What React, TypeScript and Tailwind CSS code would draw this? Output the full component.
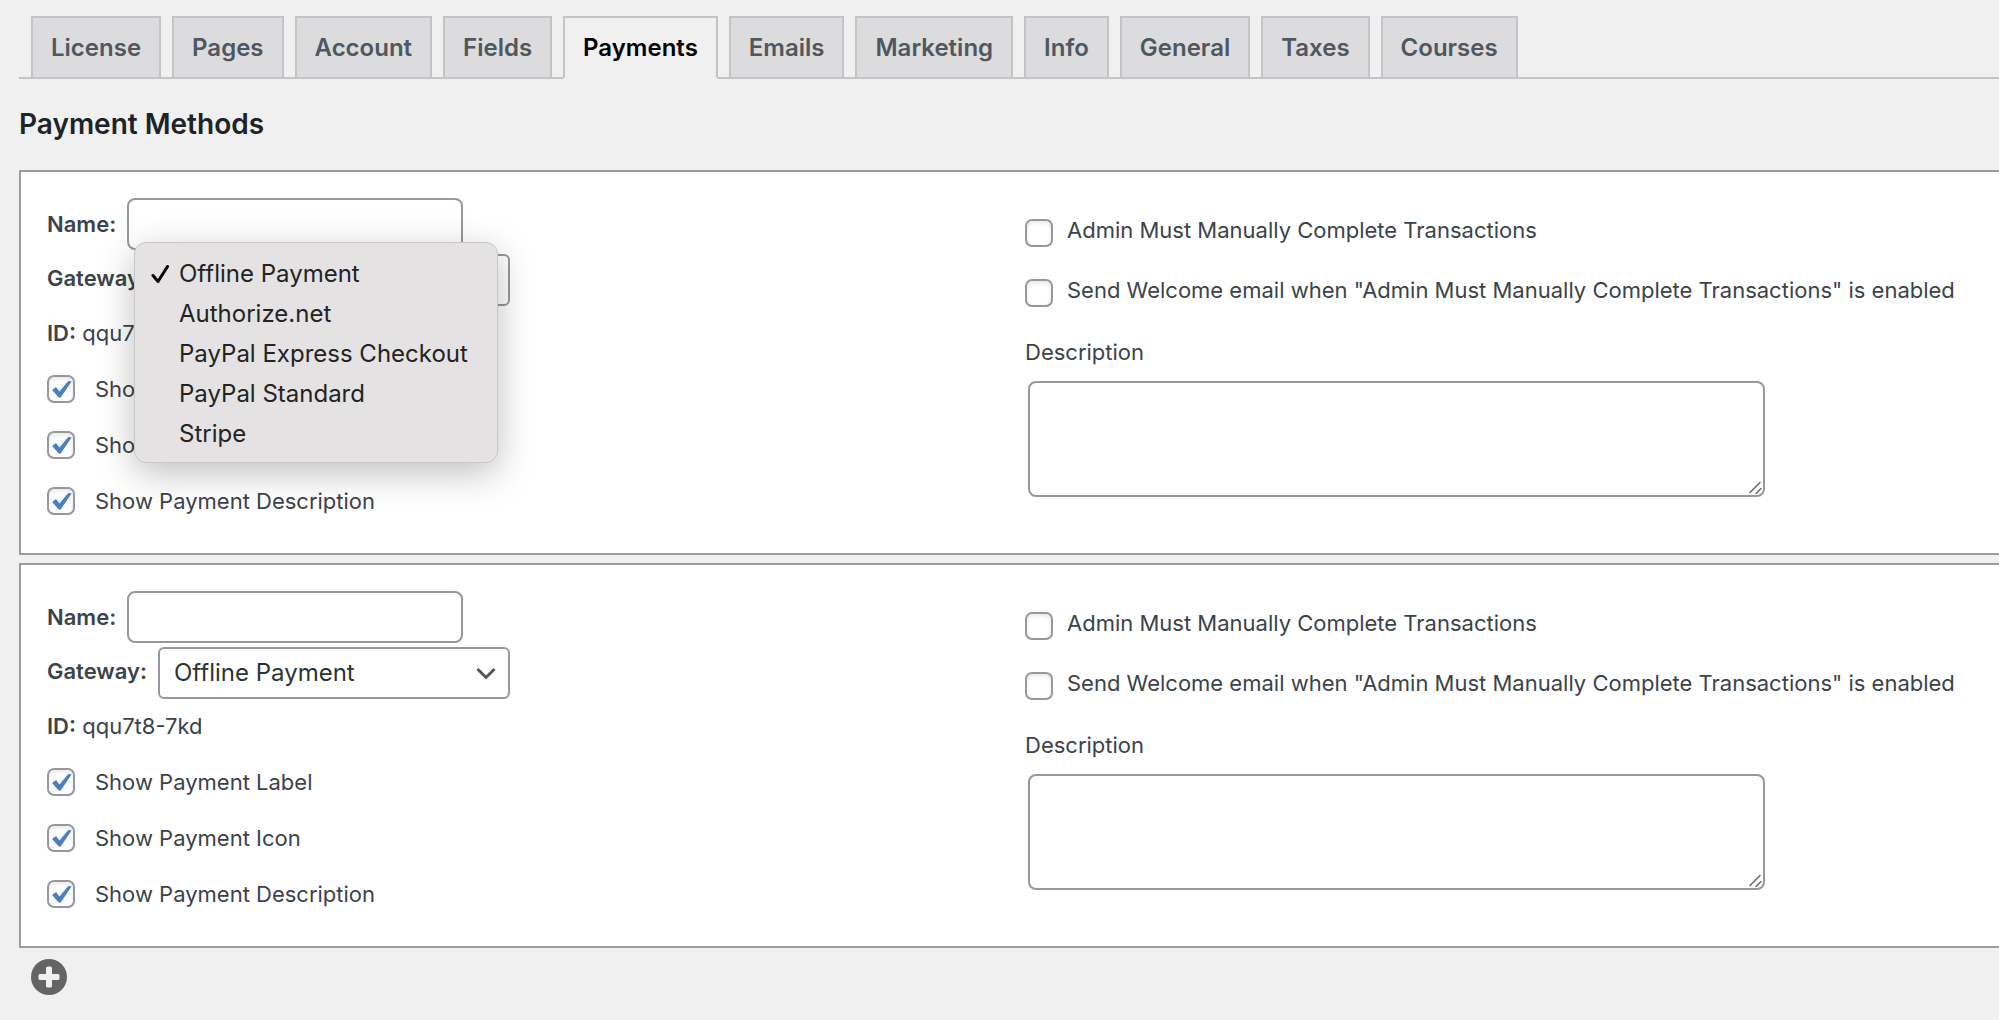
import { useState } from 'react'

const tabs = [
  'License',
  'Pages',
  'Account',
  'Fields',
  'Payments',
  'Emails',
  'Marketing',
  'Info',
  'General',
  'Taxes',
  'Courses',
]

const gateways = ['Offline Payment', 'Authorize.net', 'PayPal Express Checkout', 'PayPal Standard', 'Stripe']

const displayOptions = ['Show Payment Label', 'Show Payment Icon', 'Show Payment Description']

const adminOptions = [
  'Admin Must Manually Complete Transactions',
  'Send Welcome email when "Admin Must Manually Complete Transactions" is enabled',
]

const methods = [
  { key: 'first', id: 'qqu7t8-7kd', menuOpen: true },
  { key: 'second', id: 'qqu7t8-7kd', menuOpen: false },
]

function Checkbox({ checked = false }: { checked?: boolean }) {
  return (
    <span className="relative block size-7 shrink-0">
      <input
        type="checkbox"
        defaultChecked={checked}
        className="peer block size-7 appearance-none rounded-[7px] border-2 border-[#96989d] bg-white shadow-[inset_0_2px_4px_rgba(0,0,0,0.1)]"
      />
      <svg viewBox="0 0 28 28" className="pointer-events-none absolute inset-0 hidden size-7 peer-checked:block">
        <path
          d="M5.6 14.6 8.4 12.4 Q9 12 9.5 12.6 L12.4 16.4 20.6 6.8 Q21.4 5.9 22.4 6 L24.6 6.4 14.2 21.8 Q12.6 23.6 11 21.8 L5.5 15.6 Q5.1 15 5.6 14.6Z"
          fill="#4a80c2"
        />
      </svg>
    </span>
  )
}

function GatewayMenu({ value, onPick }: { value: string; onPick: (name: string) => void }) {
  return (
    <ul className="absolute -left-6 -top-3 z-10 w-[364px] rounded-xl border border-[#c9c7c8] bg-[#e5e2e3] pb-2 pt-[11px] shadow-[0_10px_36px_rgba(0,0,0,0.25)]">
      {gateways.map((name) => (
        <li key={name}>
          <button
            type="button"
            onClick={() => onPick(name)}
            className="flex h-10 w-full items-center pl-4 text-left text-[24px] leading-10 text-[#232323]"
          >
            <span className="w-7 shrink-0">
              {name === value && (
                <svg viewBox="0 0 20 20" className="size-5" fill="none" stroke="#000" strokeWidth="3" strokeLinecap="round" strokeLinejoin="round">
                  <path d="M2 11.5 7 17.5 16.5 2.5" />
                </svg>
              )}
            </span>
            {name}
          </button>
        </li>
      ))}
    </ul>
  )
}

function PaymentMethod({ name, id, menuOpen }: { name: string; id: string; menuOpen: boolean }) {
  const [open, setOpen] = useState(menuOpen)
  const [gateway, setGateway] = useState(gateways[0])

  return (
    <section className="grid grid-cols-2 gap-x-1 border-2 border-r-0 border-[#9c9c9e] bg-white pb-6 pl-[26px] pt-[26px] text-[22px] text-[#3c434a]">
      <div>
        <div className="flex h-[52px] gap-[11px]">
          <label htmlFor={`${name}-name`} className="font-semibold leading-[52px]">Name:</label>
          <input
            id={`${name}-name`}
            type="text"
            className="h-[52px] w-[336px] rounded-lg border-2 border-[#96989d] bg-white px-3 text-[24px]"
          />
        </div>
        <div className="mt-1 flex h-[52px] gap-[11px]">
          <label htmlFor={`${name}-gateway`} className="font-semibold leading-[48px]">Gateway:</label>
          <div className="relative">
            <select
              id={`${name}-gateway`}
              value={gateway}
              onChange={(e) => setGateway(e.target.value)}
              className="block h-[52px] w-[352px] appearance-none rounded-md border-2 border-[#96989d] bg-white pl-[14px] pr-12 text-[24px] text-[#2c3338]"
            >
              {gateways.map((option) => (
                <option key={option}>{option}</option>
              ))}
            </select>
            <svg viewBox="0 0 24 24" className="pointer-events-none absolute right-3 top-[14px] size-6" fill="none" stroke="#555" strokeWidth="3">
              <path d="M3.500 8 12 16.500 20.500 8" />
            </svg>
            {open && (
              <GatewayMenu
                value={gateway}
                onPick={(picked) => {
                  setGateway(picked)
                  setOpen(false)
                }}
              />
            )}
          </div>
        </div>
        <p className="h-[55px] leading-[55px]">
          <strong className="font-semibold">ID:</strong> {id}
        </p>
        {displayOptions.map((option) => (
          <label key={option} className="flex h-14 items-center gap-5">
            <Checkbox checked />
            {option}
          </label>
        ))}
      </div>

      <div className="pt-[19px]">
        <div className="flex flex-col gap-[30px]">
          {adminOptions.map((option) => (
            <label key={option} className="flex h-[30px] items-end gap-[14px] whitespace-nowrap">
              <Checkbox />
              <span className="self-start leading-[26px]">{option}</span>
            </label>
          ))}
        </div>
        <label htmlFor={`${name}-description`} className="mt-8 block leading-[26px]">Description</label>
        <div className="relative ml-[3px] mt-4 w-[737px]">
          <textarea
            id={`${name}-description`}
            className="block h-[116px] w-full resize-none rounded-lg border-2 border-[#96989d] bg-white px-3 py-2"
          />
          <svg
            viewBox="0 0 14 14"
            className="pointer-events-none absolute bottom-[2px] right-[2px] size-[14px]"
            stroke="#666"
            strokeWidth="1.500"
            strokeLinecap="round"
          >
            <path d="M1 11.500 11 1.500M7 12.500 12 7.500" />
          </svg>
        </div>
      </div>
    </section>
  )
}

export default function App() {
  return (
    <main className="min-h-screen overflow-hidden bg-[#f0f0f0] pl-[19px] pt-4 font-['Inter',sans-serif]">
      <nav className="flex gap-[11px] border-b-2 border-[#c3c4c7] pl-3">
        {tabs.map((tab) => (
          <a
            key={tab}
            href={`#${tab.toLowerCase()}`}
            className={
              tab === 'Payments'
                ? '-mb-[2px] border-2 border-b-[#f0f0f0] border-[#c3c4c7] bg-[#f0f0f0] px-[18px] text-[24px] font-semibold leading-[59px] text-black'
                : 'border-2 border-b-0 border-[#c3c4c7] bg-[#dcdcde] px-[18px] text-[24px] font-semibold leading-[59px] text-[#50575e]'
            }
          >
            {tab}
          </a>
        ))}
      </nav>

      <h1 className="mb-[30px] mt-[29px] text-[28px] font-semibold leading-8 text-[#1d2327]">Payment Methods</h1>

      <div className="flex flex-col gap-2">
        {methods.map((method) => (
          <PaymentMethod key={method.key} name={method.key} id={method.id} menuOpen={method.menuOpen} />
        ))}
      </div>

      <button type="button" aria-label="Add payment method" className="ml-3 mt-[11px] block">
        <svg viewBox="0 0 36 36" className="size-9">
          <circle cx="18" cy="18" r="18" fill="#646464" />
          <path
            d="M16.5 7.5h3a1.5 1.5 0 0 1 1.5 1.5v6h6a1.5 1.5 0 0 1 1.5 1.5v3a1.5 1.5 0 0 1-1.5 1.5h-6v6a1.5 1.5 0 0 1-1.5 1.5h-3a1.5 1.5 0 0 1-1.5-1.5v-6h-6a1.5 1.5 0 0 1-1.5-1.5v-3a1.5 1.5 0 0 1 1.5-1.5h6v-6a1.5 1.5 0 0 1 1.5-1.5z"
            fill="#f0f0f0"
          />
        </svg>
      </button>
    </main>
  )
}
